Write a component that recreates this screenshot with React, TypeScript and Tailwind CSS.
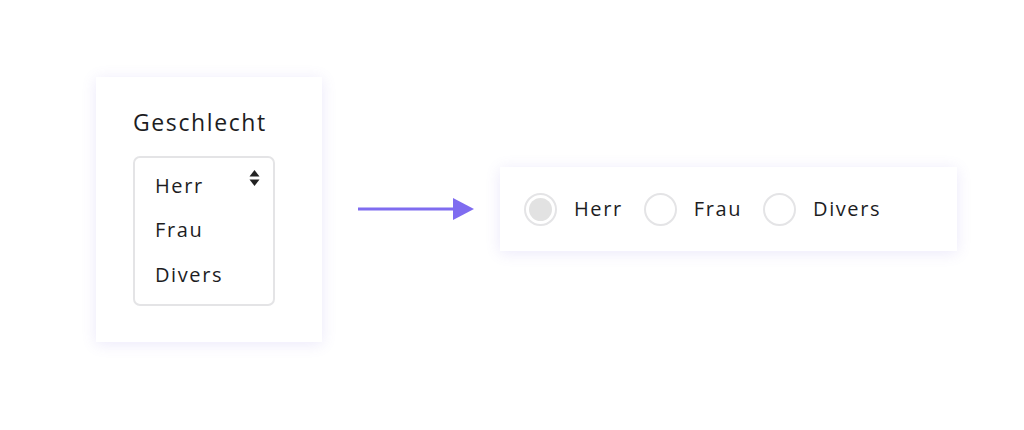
import { useState } from 'react';

const options = ['Herr', 'Frau', 'Divers'];

function SortIcon() {
  return (
    <svg width="11" height="18" viewBox="0 0 11 18" className="text-[#222]">
      <path d="M5.5 1 L10.5 7.5 H0.5 Z" fill="currentColor" />
      <path d="M5.5 17 L10.5 10.5 H0.5 Z" fill="currentColor" />
    </svg>
  );
}

function Arrow() {
  return (
    <svg width="116" height="24" viewBox="0 0 116 24" className="shrink-0">
      <line x1="0" y1="12" x2="97" y2="12" stroke="#7f6cf0" strokeWidth="3" />
      <path d="M95 1 L116 12 L95 23 Z" fill="#7f6cf0" />
    </svg>
  );
}

export default function App() {
  const [selected, setSelected] = useState('Herr');

  return (
    <div
      className="w-[1024px] h-[430px] bg-white flex items-center pb-[12px] text-[#1d1d1f]"
      style={{ fontFamily: '"Open Sans", "Liberation Sans", sans-serif' }}
    >
      {/* Old select */}
      <div className="ml-[96px] w-[226px] h-[265px] bg-white shadow-[0_2px_14px_rgba(110,95,220,0.14)] pl-[37px] pt-[31px] shrink-0">
        <div className="text-[23px] leading-[28px] tracking-[0.07em]">Geschlecht</div>
        <div className="mt-[20px] w-[142px] h-[150px] border-2 border-[#e4e4e6] rounded-[7px] relative pl-[20px] pt-[6px]">
          <div className="absolute right-[13px] top-[11px]">
            <SortIcon />
          </div>
          {options.map((o) => (
            <div key={o} className="text-[20px] leading-[44.5px] tracking-[0.08em]">
              {o}
            </div>
          ))}
        </div>
      </div>

      <div className="ml-[36px]">
        <Arrow />
      </div>

      {/* Radio group */}
      <div className="ml-[26px] w-[457px] h-[84px] bg-white shadow-[0_2px_14px_rgba(110,95,220,0.14)] flex items-center pl-[24px] shrink-0">
        {options.map((o) => (
          <button
            key={o}
            onClick={() => setSelected(o)}
            className="flex items-center mr-[21px]"
          >
            <span className="w-[33px] h-[33px] rounded-full border-2 border-[#e4e4e6] flex items-center justify-center">
              {selected === o && <span className="w-[23px] h-[23px] rounded-full bg-[#e2e2e2]" />}
            </span>
            <span className="ml-[17px] text-[20px] tracking-[0.08em]">{o}</span>
          </button>
        ))}
      </div>
    </div>
  );
}
